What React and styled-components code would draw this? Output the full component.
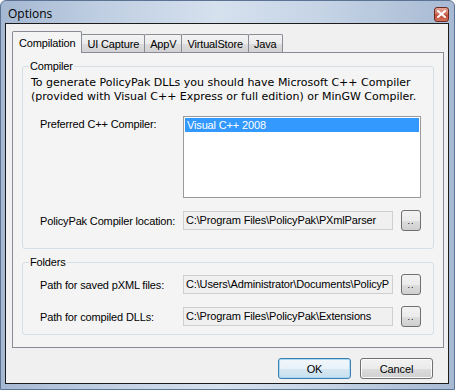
import React from "react";
import styled, { createGlobalStyle } from "styled-components";

const GlobalStyle = createGlobalStyle`
  html, body { margin: 0; padding: 0; background: #fff; }
  body {
    font-family: "Liberation Sans", Arial, sans-serif;
    font-size: 11px;
    letter-spacing: -0.15px;
    color: #000;
  }
  * { box-sizing: border-box; }
`;

const Window = styled.div`
  width: 455px;
  height: 390px;
  display: flex;
  flex-direction: column;
  border: 1px solid #5d7394;
  border-radius: 6px 6px 0 0;
  background: linear-gradient(to right, #a5b8d2 0%, #bfcee2 22%, #d6e1ee 48%, #c6d4e6 70%, #a7bad3 100%);
  padding: 0 5px 5px 4px;
`;

const TitleBar = styled.div`
  height: 22px;
  flex: none;
  display: flex;
  align-items: center;
  justify-content: space-between;
  padding: 0 0 0 3px;
`;

const Title = styled.span`
  font-family: "Open Sans", "Liberation Sans", sans-serif;
  font-size: 12px;
  letter-spacing: 0;
  color: #000;
  margin-top: 2px;
`;

const CloseBtn = styled.div`
  width: 15px;
  height: 15px;
  margin-top: 4px;
  border: 1px solid #6b2a23;
  border-radius: 3px;
  background: linear-gradient(#e6a597 0%, #d0735f 45%, #bf4a35 55%, #d0715a 100%);
  display: flex;
  align-items: center;
  justify-content: center;
`;

const Client = styled.div`
  flex: 1;
  display: flex;
  flex-direction: column;
  border: 1px solid #1c1c1c;
  background: #f0f0f0;
  padding: 7px 4px 0 6px;
`;

const TabStrip = styled.div`
  display: flex;
  align-items: flex-end;
  height: 22px;
  margin-bottom: -1px;
  position: relative;
  z-index: 1;
`;

const Tab = styled.div`
  height: ${p => (p.$active ? "22px" : "18px")};
  margin-bottom: ${p => (p.$active ? "0" : "1px")};
  margin-left: ${p => (p.$first ? "0" : "-1px")};
  padding: ${p => (p.$active ? "0 6px" : "1px 5px 0")};
  display: flex;
  align-items: center;
  border: 1px solid #898c95;
  border-bottom: none;
  border-radius: 2px 2px 0 0;
  background: ${p =>
    p.$active ? "#f4f4f4" : "linear-gradient(#f3f3f3 0%, #ebebeb 50%, #dddddd 51%, #d2d2d2 100%)"};
  position: relative;
  z-index: ${p => (p.$active ? 2 : 1)};
`;

const Panel = styled.div`
  height: 296px;
  border: 1px solid #898c95;
  background: #f4f4f4;
  padding: 7px 9px 0 9px;
  display: flex;
  flex-direction: column;
`;

const Group = styled.fieldset`
  margin: ${p => (p.$spaced ? "7px 0 0" : "0")};
  padding: 0 8px ${p => p.$bottom}px 8px;
  border: 1px solid #d5dfe5;
  border-radius: 3px;
  min-width: 0;
`;

const Legend = styled.legend`
  padding: 0 1px;
  margin-left: -2px;
  line-height: 13px;
  font-size: 11px;
`;

const Description = styled.div`
  font-family: "DejaVu Sans", Verdana, sans-serif;
  font-size: 11px;
  letter-spacing: 0;
  line-height: 14px;
  margin-top: 3px;
  white-space: nowrap;
`;

const Form = styled.div`
  display: grid;
  grid-template-columns: 135px 210px 20px;
  column-gap: 8px;
  row-gap: ${p => p.$gap}px;
  margin: ${p => p.$top}px 0 0 9px;
  align-items: center;
`;

const Label = styled.div`
  align-self: ${p => (p.$top ? "start" : "center")};
  padding-top: ${p => (p.$top ? "2px" : "0")};
  white-space: nowrap;
`;

const ListBox = styled.div`
  grid-column: 2 / 4;
  height: 82px;
  border: 1px solid #9a9a9a;
  background: #fff;
  padding: 1px;
`;

const ListItem = styled.div`
  height: 14px;
  line-height: 14px;
  padding-left: 2px;
  background: ${p => (p.$selected ? "#3399ff" : "transparent")};
  color: ${p => (p.$selected ? "#fff" : "#000")};
`;

const TextBox = styled.div`
  height: 19px;
  border: 1px solid #cfcfcf;
  background: #f0f0f0;
  padding: 0 2px;
  line-height: 17px;
  white-space: nowrap;
`;

const Browse = styled.div`
  width: 20px;
  height: 21px;
  border: 1px solid #707070;
  border-radius: 3px;
  background: linear-gradient(#f2f2f2 0%, #ebebeb 50%, #dddddd 51%, #cfcfcf 100%);
  display: flex;
  justify-content: center;
  align-items: center;
  font-size: 9px;
  line-height: 9px;
  padding-top: 2px;
  letter-spacing: 1px;
`;

const ButtonRow = styled.div`
  display: flex;
  justify-content: flex-end;
  gap: 9px;
  margin-top: 10px;
  padding-right: 11px;
`;

const Button = styled.div`
  width: 73px;
  height: 21px;
  border: 1px solid ${p => (p.$default ? "#3c7fb1" : "#707070")};
  border-radius: 3px;
  background: ${p =>
    p.$default
      ? "linear-gradient(#f2f8fc 0%, #e8f2f9 50%, #d7e8f3 51%, #c8dfee 100%)"
      : "linear-gradient(#f2f2f2 0%, #ebebeb 50%, #dddddd 51%, #cfcfcf 100%)"};
  box-shadow: ${p => (p.$default ? "inset 0 0 0 1px #a8d8f2" : "inset 0 0 0 1px #fbfbfb")};
  display: flex;
  align-items: center;
  justify-content: center;
  font-size: 11px;
`;

const tabs = ["Compilation", "UI Capture", "AppV", "VirtualStore", "Java"];

export default function App() {
  return (
    <>
      <GlobalStyle />
      <Window>
        <TitleBar>
          <Title>Options</Title>
          <CloseBtn>
            <svg width="9" height="8" viewBox="0 0 9 8">
              <path d="M1 1 L8 7 M8 1 L1 7" stroke="#fff" strokeWidth="2" strokeLinecap="square" />
            </svg>
          </CloseBtn>
        </TitleBar>
        <Client>
          <TabStrip>
            {tabs.map((t, i) => (
              <Tab key={t} $active={i === 0} $first={i === 0}>{t}</Tab>
            ))}
          </TabStrip>
          <Panel>
            <Group $bottom={17}>
              <Legend>Compiler</Legend>
              <Description>
                To generate PolicyPak DLLs you should have Microsoft C++ Compiler
                <br />
                (provided with Visual C++ Express or full edition) or MinGW Compiler.
              </Description>
              <Form $top={12} $gap={12}>
                <Label $top>Preferred C++ Compiler:</Label>
                <ListBox>
                  <ListItem $selected>Visual C++ 2008</ListItem>
                </ListBox>
                <Label>PolicyPak Compiler location:</Label>
                <TextBox>C:\Program Files\PolicyPak\PXmlParser</TextBox>
                <Browse>..</Browse>
              </Form>
            </Group>
            <Group $spaced $bottom={7}>
              <Legend>Folders</Legend>
              <Form $top={5} $gap={11}>
                <Label>Path for saved pXML files:</Label>
                <TextBox>C:\Users\Administrator\Documents\PolicyP</TextBox>
                <Browse>..</Browse>
                <Label>Path for compiled DLLs:</Label>
                <TextBox>C:\Program Files\PolicyPak\Extensions</TextBox>
                <Browse>..</Browse>
              </Form>
            </Group>
          </Panel>
          <ButtonRow>
            <Button $default>OK</Button>
            <Button>Cancel</Button>
          </ButtonRow>
        </Client>
      </Window>
    </>
  );
}
